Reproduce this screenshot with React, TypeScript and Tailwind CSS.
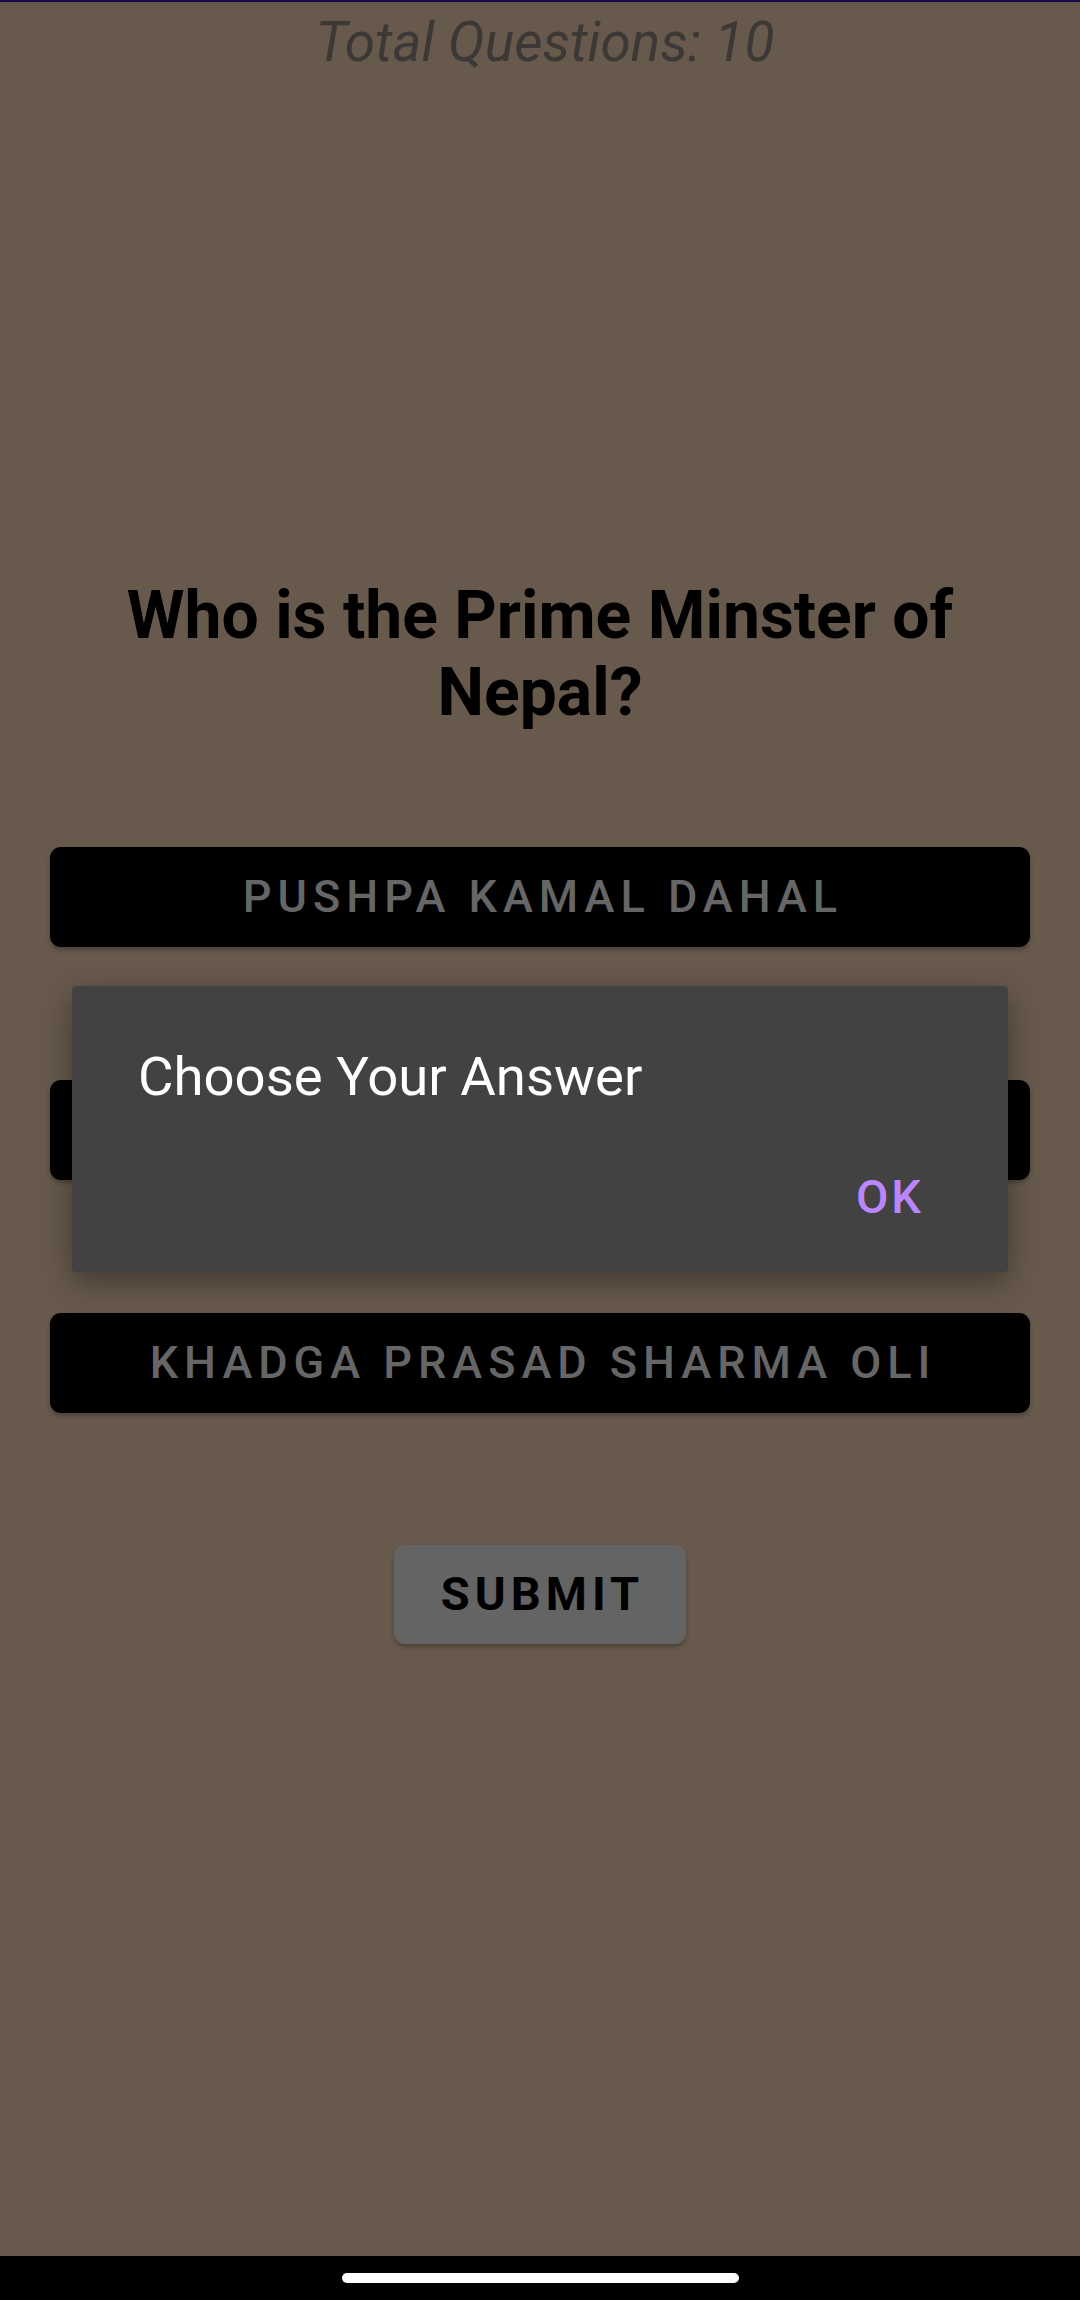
const options = ["PUSHPA KAMAL DAHAL", "SHER BAHADUR DEUBA", "KHADGA PRASAD SHARMA OLI"];

const AnswerButton = ({ label }: { label: string }) => {
  return (
    <div className="flex h-[100px] w-full items-center justify-center rounded-[11px] bg-black shadow-[0_3px_4px_rgba(0,0,0,0.25)]">
      <span className="pl-[6px] text-[45px] font-medium tracking-[6px] text-[#666666]">{label}</span>
    </div>
  );
};

export default function App() {
  return (
    <div className="relative flex h-[2300px] w-[1080px] flex-col bg-[#67594c] font-['Roboto',sans-serif]">
      <div className="h-[2px] w-full bg-[#1c0a4c]" />
      <p className="mt-[6px] pl-[10px] text-center text-[55px] italic leading-[68px] text-[#3b3835]">Total Questions: 10</p>

      <div className="flex flex-1 flex-col items-center px-[50px]">
        <h1 className="mt-[501px] px-[40px] text-center text-[66px] font-bold leading-[77px] text-black">
          Who is the Prime Minster of Nepal?
        </h1>

        <div className="mt-[116px] flex w-full flex-col gap-[133px]">
          {options.map((o) => (
            <AnswerButton key={o} label={o} />
          ))}
        </div>

        <div className="mt-[132px] flex h-[99px] w-[292px] items-center justify-center rounded-[11px] bg-[#646464] shadow-[0_3px_4px_rgba(0,0,0,0.25)]">
          <span className="pl-[5px] text-[47px] font-bold tracking-[5px] text-black">SUBMIT</span>
        </div>
      </div>

      <div className="flex h-[44px] w-full items-center justify-center bg-black">
        <div className="h-[10px] w-[397px] rounded-full bg-white" />
      </div>

      {/* alert dialog */}
      <div className="absolute left-[72px] top-[986px] flex h-[286px] w-[936px] flex-col rounded-[4px] bg-[#424242] shadow-[0_10px_30px_rgba(0,0,0,0.35)]">
        <p className="pl-[66px] pt-[58px] text-[54.5px] leading-[64px] text-white">Choose Your Answer</p>
        <div className="mt-auto flex justify-end pb-[48px] pr-[84px]">
          <span className="text-[47px] font-medium leading-[55px] tracking-[3px] text-[#bb86fc]">OK</span>
        </div>
      </div>
    </div>
  );
}
